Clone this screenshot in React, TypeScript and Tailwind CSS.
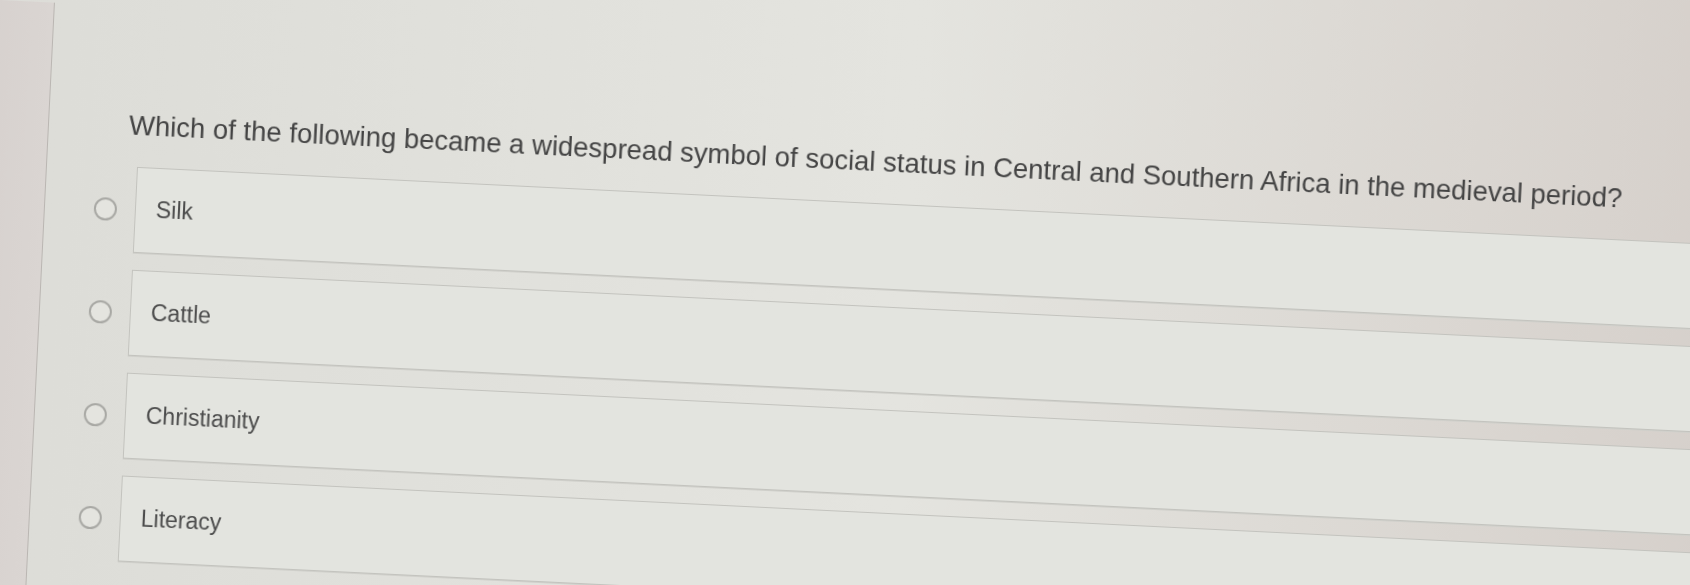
import React from "react";

const options = ["Silk", "Cattle", "Christianity", "Literacy"];

function Radio() {
  return (
    <span className="block h-[23px] w-[23px] shrink-0 rounded-full border-2 border-[#a8a8a4] bg-[#e4e4df]" />
  );
}

function Option({ label }: { label: string }) {
  return (
    <label className="flex items-center">
      <span className="flex w-[41px] shrink-0 justify-start">
        <Radio />
      </span>
      <span className="flex h-[86px] w-[1800px] items-center border border-[#c3c3be] bg-[#e3e4df] pb-[2px] pl-[20px] text-[23px] text-[#4c4c4c] shadow-[0_1px_0_#d0d0cb]">
        {label}
      </span>
    </label>
  );
}

export default function App() {
  return (
    <div className="h-[585px] w-[1690px] overflow-hidden bg-[#dcdad5] font-['Liberation_Sans',Arial,sans-serif]">
      <div className="-ml-[60px] -mt-[120px] flex h-[860px] w-[1960px] origin-[60px_120px] rotate-[2.8deg] bg-linear-to-r from-[#dcdcd7] via-[#e4e4df] to-[#d3ccc7] pl-[60px] pt-[120px] blur-[0.4px]">
        {/* left gutter of the page */}
        <div className="-ml-[60px] w-[115px] shrink-0 border-r border-[#bab6b2] bg-linear-to-r from-[#d4cecb] to-[#dad5d2]" />
        <main className="flex flex-col pl-[49px]">
          <h1 className="mt-[105px] ml-[31px] whitespace-nowrap text-[27.5px] leading-[28px] text-[#444444]">
            Which of the following became a widespread symbol of social status in Central and Southern Africa in the medieval period?
          </h1>
          <div className="mt-[27px] flex flex-col gap-[17px]">
            {options.map((o) => (
              <Option key={o} label={o} />
            ))}
          </div>
        </main>
      </div>
    </div>
  );
}
